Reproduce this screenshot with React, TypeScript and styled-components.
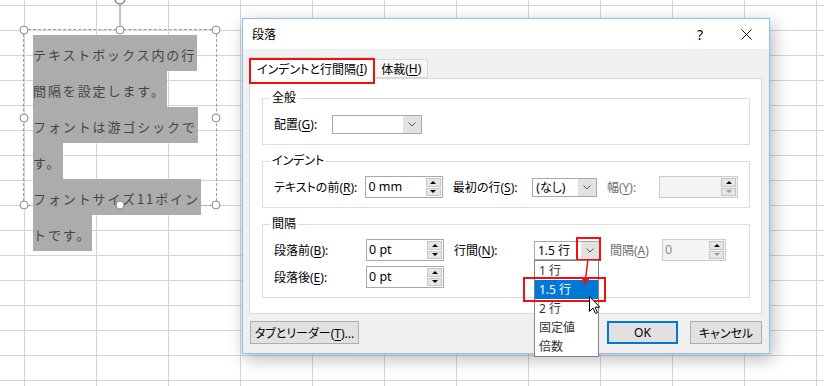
import styled, { createGlobalStyle } from 'styled-components';

const GlobalStyle = createGlobalStyle`
  html, body {
    margin: 0;
    padding: 0;
    background: #ffffff;
  }
  body {
    font-family: "Noto Sans", "Noto Sans CJK JP", sans-serif;
  }
`;

const Sheet = styled.div`
  position: relative;
  width: 824px;
  height: 386px;
  overflow: hidden;
  background-color: #ffffff;
  background-image: linear-gradient(to right, #d5d5d5 1px, transparent 1px),
    linear-gradient(to bottom, #d5d5d5 1px, transparent 1px);
  background-size: 72px 25px;
  background-position: 24px 5px;
`;

/* ---------- text box on the sheet ---------- */

const TextBox = styled.div`
  position: absolute;
  left: 23px;
  top: 29px;
  width: 194px;
  height: 177px;
  box-sizing: border-box;
  border: 1px dashed #9c9c9c;
`;

const TextFlow = styled.div`
  padding: 5px 0 0 9px;
  font-family: "Noto Sans CJK JP", sans-serif;
  font-size: 13px;
  letter-spacing: 1.9px;
  color: #454545;
`;

const SelLine = styled.div`
  width: fit-content;
  height: 36px;
  box-sizing: border-box;
  padding: 4px 1px 0 0;
  line-height: 32px;
  white-space: nowrap;
  background: #acacac;
`;

const Handle = styled.span<{ $x: number; $y: number }>`
  position: absolute;
  left: ${(p) => p.$x}%;
  top: ${(p) => p.$y}%;
  width: 9px;
  height: 9px;
  box-sizing: border-box;
  border: 1.5px solid #8a8a8a;
  border-radius: 50%;
  background: #ffffff;
  transform: translate(-50%, -50%);
`;

const RotateMark = styled.svg`
  position: absolute;
  left: 50%;
  top: -30px;
  transform: translateX(-50%);
  overflow: visible;
`;

/* ---------- dialog ---------- */

const Dialog = styled.div`
  position: absolute;
  left: 242px;
  top: 18px;
  width: 528px;
  height: 336px;
  box-sizing: border-box;
  border: 1px solid #8dbfee;
  background: #f0f0f0;
  box-shadow: 3px 5px 16px rgba(0, 0, 0, 0.28);
  display: flex;
  flex-direction: column;
  font-size: 12px;
  color: #000000;
  font-feature-settings: "palt" 1;
`;

const TitleBar = styled.div`
  flex: none;
  height: 30px;
  background: #ffffff;
  display: flex;
  align-items: center;
`;

const Title = styled.span`
  flex: 1;
  padding-left: 9px;
  font-size: 12px;
`;

const CaptionButton = styled.span`
  width: 46px;
  height: 100%;
  display: flex;
  align-items: center;
  justify-content: center;
  font-size: 14px;
`;

const DialogBody = styled.div`
  flex: 1;
  display: flex;
  flex-direction: column;
  padding: 8px 7px 8px 6px;
`;

const TabRow = styled.div`
  display: flex;
  align-items: flex-end;
  height: 21px;
`;

const Tab = styled.div<{ $active?: boolean }>`
  position: relative;
  z-index: ${(p) => (p.$active ? 2 : 1)};
  height: ${(p) => (p.$active ? 22 : 19)}px;
  margin-bottom: ${(p) => (p.$active ? -1 : 0)}px;
  box-sizing: border-box;
  padding: 0 ${(p) => (p.$active ? 7 : 6)}px;
  display: flex;
  align-items: center;
  background: ${(p) => (p.$active ? '#ffffff' : '#f7f7f7')};
  border: 1px solid #d9d9d9;
  border-bottom: ${(p) => (p.$active ? 'none' : '1px solid #d9d9d9')};
  border-left: ${(p) => (p.$active ? '1px solid #d9d9d9' : 'none')};
  white-space: nowrap;
`;

const RedMark = styled.span<{ $t: number; $l: number; $r: number; $b: number }>`
  position: absolute;
  top: ${(p) => p.$t}px;
  left: ${(p) => p.$l}px;
  right: ${(p) => p.$r}px;
  bottom: ${(p) => p.$b}px;
  border: 2px solid #f01010;
  pointer-events: none;
  z-index: 5;
`;

const Panel = styled.div`
  height: 236px;
  box-sizing: border-box;
  border: 1px solid #d9d9d9;
  background: #ffffff;
  padding: 12px 11px 0 12px;
  display: flex;
  flex-direction: column;
  gap: 9px;
`;

const Group = styled.fieldset`
  margin: 0;
  padding: 8px 11px 9px 11px;
  min-width: 0;
  border: 1px solid #dddddd;
  display: flex;
  flex-direction: column;
  gap: 5px;
`;

const GroupTitle = styled.legend`
  margin-left: -4px;
  padding: 0 2px;
  font-size: 12px;
  line-height: 14px;
`;

const Row = styled.div`
  display: flex;
  align-items: center;
  height: 22px;
`;

const Label = styled.span<{ $w: number; $pl?: number; $muted?: boolean }>`
  width: ${(p) => p.$w}px;
  box-sizing: border-box;
  padding-left: ${(p) => p.$pl ?? 0}px;
  white-space: nowrap;
  color: ${(p) => (p.$muted ? '#6d6d6d' : '#000000')};
`;

const Key = styled.u`
  text-underline-offset: 2px;
`;

const Combo = styled.div<{ $w: number }>`
  position: relative;
  display: flex;
  width: ${(p) => p.$w}px;
  height: 19px;
  box-sizing: border-box;
  border: 1px solid #a9a9a9;
  background: #ffffff;
`;

const ComboValue = styled.span`
  flex: 1;
  padding-left: 3px;
  line-height: 17px;
  font-size: 12px;
  white-space: nowrap;
`;

const ComboButton = styled.span`
  width: 18px;
  background: #e2e2e2;
  display: flex;
  align-items: center;
  justify-content: center;
`;

const SpinBox = styled.div<{ $w: number; $disabled?: boolean }>`
  display: flex;
  width: ${(p) => p.$w}px;
  height: 22px;
  box-sizing: border-box;
  border: 1px solid ${(p) => (p.$disabled ? '#cccccc' : '#a9a9a9')};
  background: ${(p) => (p.$disabled ? '#f4f4f4' : '#ffffff')};
`;

const SpinValue = styled.span<{ $disabled?: boolean }>`
  flex: 1;
  padding-left: 2px;
  line-height: 20px;
  font-size: 12.5px;
  color: ${(p) => (p.$disabled ? '#8c8c8c' : '#000000')};
  white-space: nowrap;
`;

const SpinButtons = styled.div`
  width: 17px;
  padding: 1px;
  box-sizing: border-box;
  display: flex;
  flex-direction: column;
  gap: 1px;
`;

const SpinButton = styled.span`
  flex: 1;
  background: #e6e6e6;
  border: 1px solid #c6c6c6;
  display: flex;
  align-items: center;
  justify-content: center;
`;

const Tri = styled.span<{ $down?: boolean; $faded?: boolean }>`
  width: 0;
  height: 0;
  border-left: 3px solid transparent;
  border-right: 3px solid transparent;
  ${(p) =>
    p.$down
      ? `border-top: 3px solid ${p.$faded ? '#9a9a9a' : '#000'};`
      : `border-bottom: 3px solid #000;`}
`;

const DropList = styled.ul`
  position: absolute;
  left: -1px;
  top: calc(100% + 1px);
  width: 65px;
  margin: 0;
  padding: 0;
  list-style: none;
  box-sizing: border-box;
  border: 1px solid #828282;
  background: #ffffff;
  z-index: 10;
`;

const DropItem = styled.li<{ $selected?: boolean }>`
  position: relative;
  height: 19px;
  line-height: 19px;
  padding-left: 4px;
  font-size: 12px;
  white-space: nowrap;
  background: ${(p) => (p.$selected ? '#0078d7' : 'transparent')};
  color: ${(p) => (p.$selected ? '#ffffff' : '#333333')};
`;

const Overlay = styled.svg<{ $l: number; $t: number }>`
  position: absolute;
  left: ${(p) => p.$l}px;
  top: ${(p) => p.$t}px;
  overflow: visible;
  z-index: 12;
`;

const ButtonRow = styled.div`
  display: flex;
  align-items: center;
  margin-top: 7px;
  padding-left: 1px;
  gap: 12px;
`;

const Spacer = styled.span`
  flex: 1;
`;

const PushButton = styled.button<{ $w: number; $default?: boolean }>`
  width: ${(p) => p.$w}px;
  height: 23px;
  box-sizing: border-box;
  padding: 0;
  font: inherit;
  font-size: 12px;
  color: #000000;
  background: #e1e1e1;
  border: ${(p) => (p.$default ? '2px solid #0078d7' : '1px solid #adadad')};
  white-space: nowrap;
`;

function Chevron() {
  return (
    <svg width="8" height="5" viewBox="0 0 8 5">
      <path d="M0.5 0.5 L4 4 L7.5 0.5" fill="none" stroke="#555" strokeWidth="1" />
    </svg>
  );
}

function Spinner({ w, value, disabled }: { w: number; value: string; disabled?: boolean }) {
  return (
    <SpinBox $w={w} $disabled={disabled}>
      <SpinValue $disabled={disabled}>{value}</SpinValue>
      <SpinButtons>
        <SpinButton>
          <Tri />
        </SpinButton>
        <SpinButton>
          <Tri $down $faded={disabled} />
        </SpinButton>
      </SpinButtons>
    </SpinBox>
  );
}

const lines = [
  'テキストボックス内の行',
  '間隔を設定します。',
  'フォントは游ゴシックで',
  'す。',
  'フォントサイズ11ポイン',
  'トです。',
];

const handles = [
  [0, 0],
  [50, 0],
  [100, 0],
  [0, 50],
  [100, 50],
  [0, 100],
  [50, 100],
  [100, 100],
];

const spacingItems = ['1 行', '1.5 行', '2 行', '固定値', '倍数'];

export default function App() {
  return (
    <>
      <GlobalStyle />
      <Sheet>
        <TextBox>
          <RotateMark width="16" height="28" viewBox="0 0 16 28">
            <path d="M3 -1 A5 5 0 1 0 13 -1" fill="none" stroke="#8a8a8a" strokeWidth="1.5" />
            <line x1="8" y1="4.5" x2="8" y2="25" stroke="#8a8a8a" strokeWidth="1" />
          </RotateMark>
          <TextFlow>
            {lines.map((l) => (
              <SelLine key={l}>{l}</SelLine>
            ))}
          </TextFlow>
          {handles.map(([x, y]) => (
            <Handle key={`${x}-${y}`} $x={x} $y={y} />
          ))}
        </TextBox>

        <Dialog>
          <TitleBar>
            <Title>段落</Title>
            <CaptionButton>?</CaptionButton>
            <CaptionButton>
              <svg width="11" height="11" viewBox="0 0 11 11">
                <path d="M0.5 0.5 L10.5 10.5 M10.5 0.5 L0.5 10.5" stroke="#111" strokeWidth="1" />
              </svg>
            </CaptionButton>
          </TitleBar>

          <DialogBody>
            <TabRow>
              <Tab $active>
                インデントと行間隔(<Key>I</Key>)
                <RedMark $t={0} $l={-1} $r={-1} $b={-5} />
              </Tab>
              <Tab>
                体裁(<Key>H</Key>)
              </Tab>
            </TabRow>

            <Panel>
              <Group>
                <GroupTitle>全般</GroupTitle>
                <Row>
                  <Label $w={58}>
                    配置(<Key>G</Key>):
                  </Label>
                  <Combo $w={90}>
                    <ComboValue />
                    <ComboButton>
                      <Chevron />
                    </ComboButton>
                  </Combo>
                </Row>
              </Group>

              <Group>
                <GroupTitle>インデント</GroupTitle>
                <Row>
                  <Label $w={92}>
                    テキストの前(<Key>R</Key>):
                  </Label>
                  <Spinner w={78} value="0 mm" />
                  <Label $w={90} $pl={10}>
                    最初の行(<Key>S</Key>):
                  </Label>
                  <Combo $w={65}>
                    <ComboValue>(なし)</ComboValue>
                    <ComboButton>
                      <Chevron />
                    </ComboButton>
                  </Combo>
                  <Label $w={62} $pl={10} $muted>
                    幅(<Key>Y</Key>):
                  </Label>
                  <Spinner w={80} value="" disabled />
                </Row>
              </Group>

              <Group>
                <GroupTitle>間隔</GroupTitle>
                <Row>
                  <Label $w={92}>
                    段落前(<Key>B</Key>):
                  </Label>
                  <Spinner w={78} value="0 pt" />
                  <Label $w={90} $pl={10}>
                    行間(<Key>N</Key>):
                  </Label>
                  <Combo $w={66}>
                    <ComboValue>1.5 行</ComboValue>
                    <ComboButton>
                      <Chevron />
                    </ComboButton>
                    <RedMark $t={-5} $l={41} $r={-2} $b={-2} />
                    <Overlay $l={44} $t={16} width="14" height="30" viewBox="0 0 14 30">
                      <line x1="9" y1="1" x2="6.5" y2="21" stroke="#f01010" strokeWidth="1.5" />
                      <polygon points="2,19 11,20 6,27" fill="#f01010" />
                    </Overlay>
                    <DropList>
                      {spacingItems.map((item) => (
                        <DropItem key={item} $selected={item === '1.5 行'}>
                          {item}
                          {item === '1.5 行' && <RedMark $t={-3} $l={-12} $r={-8} $b={-3} />}
                        </DropItem>
                      ))}
                      <Overlay $l={54} $t={35} width="12" height="19" viewBox="0 0 12 19">
                        <path
                          d="M0.5 0.5 L0.5 15.5 L4 12 L6.5 17.5 L8.5 16.6 L6.1 11.2 L10.8 11.2 Z"
                          fill="#ffffff"
                          stroke="#000000"
                          strokeWidth="1"
                        />
                      </Overlay>
                    </DropList>
                  </Combo>
                  <Label $w={62} $pl={10} $muted>
                    間隔(<Key>A</Key>)
                  </Label>
                  <Spinner w={64} value="0" disabled />
                </Row>
                <Row>
                  <Label $w={92}>
                    段落後(<Key>E</Key>):
                  </Label>
                  <Spinner w={78} value="0 pt" />
                </Row>
              </Group>
            </Panel>

            <ButtonRow>
              <PushButton $w={109}>
                タブとリーダー(<Key>T</Key>)...
              </PushButton>
              <Spacer />
              <PushButton $w={71} $default>
                OK
              </PushButton>
              <PushButton $w={72}>キャンセル</PushButton>
            </ButtonRow>
          </DialogBody>
        </Dialog>
      </Sheet>
    </>
  );
}
